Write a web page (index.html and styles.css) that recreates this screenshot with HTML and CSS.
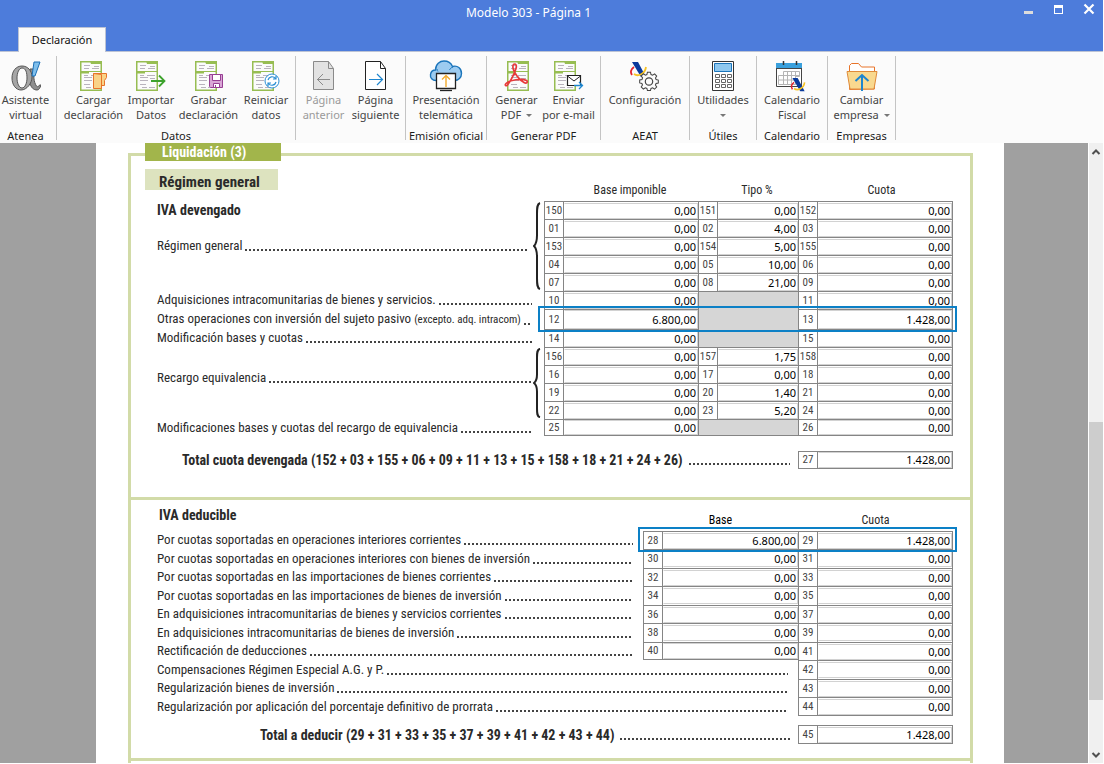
FILE: index.html
```html
<!DOCTYPE html>
<html lang="es">
<head>
<meta charset="utf-8">
<title>Modelo 303 - Página 1</title>
<link rel="stylesheet" href="styles.css">
</head>
<body>
<svg class="defs" aria-hidden="true">
  <symbol id="sheet" viewBox="0 0 30 32">
    <rect x=".75" y="1.75" width="20.5" height="28.5" fill="#fbfbfb" stroke="#97bd52" stroke-width="1.5"/>
    <path d="M10 1h12v3H11zM1 11h20v1H9v1.500H1z" fill="#97bd52"/>
    <path d="M4 5.500h6M14 6.500h5M4 8.500h5M12 8.500h7M4 15.500h4M11 15.500h8M4 17.500h8M14 18.500h5M4 20.500h8M4 24.500h6M6 27.500h5M13 27.500h6" stroke="#b9b3bd" fill="none"/>
  </symbol>
  <symbol id="aeat" viewBox="0 0 18 16">
    <path d="M2 0h6l8 15h-5z" fill="#0a3a9c"/>
    <path d="M4 5C1 7 0 10 2 13" fill="none" stroke="#e2222b" stroke-width="1.800"/>
    <path d="M4 12c4 3 11 0 12-7" fill="none" stroke="#f7c325" stroke-width="1.800"/>
  </symbol>
  <symbol id="brace" viewBox="0 0 8 90" preserveAspectRatio="none">
    <path d="M7 1C4 2 4 6 4 12V34C4 40 3 43 1 45C3 47 4 50 4 56V78C4 84 4 88 7 89" fill="none" stroke="#222" stroke-width="2" vector-effect="non-scaling-stroke"/>
  </symbol>
</svg>

<header class="titlebar">
  <h1 class="title">Modelo 303 - Página 1</h1>
  <div class="controls">
    <button aria-label="Minimizar"><svg width="12" height="12" viewBox="0 0 12 12"><path d="M1 8h9v3H1z" fill="#dcdcdc"/></svg></button>
    <button aria-label="Maximizar"><svg width="12" height="12" viewBox="0 0 12 12"><path d="M1 2h9v9H1zM2 5v5h7V5z" fill="#fff" fill-rule="evenodd"/></svg></button>
    <button aria-label="Cerrar"><svg width="12" height="12" viewBox="0 0 12 12"><path d="M1.500 1.500l9 9M10.500 1.500l-9 9" stroke="#fff" stroke-width="2.200"/></svg></button>
  </div>
</header>
<nav class="tabs"><button class="tab">Declaración</button></nav>

<div class="ribbon">
  <section class="group g-atenea">
    <div class="tools">
      <button class="tool">
        <svg width="30" height="30" viewBox="0 0 30 30"><path d="M23 8h-4c-1 5-1 9 0 14 1 5 4 7 7 7 2 0 3-2 4-5h-1.500c-1 2-2 2.500-3 1-3-4-3-11-2.500-17z" fill="#8e8e8e" stroke="#555"/><path d="M11 5C5 5 1 10 1 17s4 12 9 12c6 0 11-7 11-13S17 5 11 5zm0 2c4 0 5 5 5 10s-2 10-5 10-5-5-5-10 2-10 5-10z" fill="#a6a6a6" stroke="#555"/><path d="M23 1h6l-5 14h-3z" fill="#7fbfec" stroke="#1c6fb5"/></svg>
        <span>Asistente<br>virtual</span></button>
    </div>
    <h2>Atenea</h2>
  </section>
  <section class="group g-datos">
    <div class="tools">
      <button class="tool w-wide">
        <svg width="28" height="32" viewBox="0 0 28 32"><use href="#sheet" width="30" height="32"/><path d="M13.500 13.500h13v4l-2 3v5h-3v3h-8z" fill="#f9d388" stroke="#e8742a"/><path d="M13.500 13.500l8 1v14" fill="none" stroke="#e8742a"/></svg>
        <span>Cargar<br>declaración</span></button>
      <button class="tool w-mid">
        <svg width="30" height="32" viewBox="0 0 30 32"><use href="#sheet" width="30" height="32"/><path d="M15 21h13M23 15.500l5.500 5.500-5.500 5.500" fill="none" stroke="#3da32d" stroke-width="1.800"/></svg>
        <span>Importar<br>Datos</span></button>
      <button class="tool w-wide">
        <svg width="28" height="32" viewBox="0 0 28 32"><use href="#sheet" width="30" height="32"/><path d="M14.500 14.500h13v13h-12l-1-1z" fill="#d9a6d6" stroke="#973f93"/><path d="M17.500 14.500h8v6h-8zM18.500 23.500h6v4h-6z" fill="#fff" stroke="#973f93"/><path d="M20 25h1v2h-1z" fill="#973f93"/></svg>
        <span>Grabar<br>declaración</span></button>
      <button class="tool w-mid">
        <svg width="28" height="32" viewBox="0 0 28 32"><use href="#sheet" width="30" height="32"/><circle cx="20" cy="21" r="7" fill="#fff" stroke="#2b8fd4"/><path d="M16 20a4.200 4.200 0 0 1 7.500-1.500M24 22a4.200 4.200 0 0 1-7.500 1.500M24 16v3h-3M16 26v-3h3" fill="none" stroke="#2b8fd4" stroke-width="1.200"/></svg>
        <span>Reiniciar<br>datos</span></button>
    </div>
    <h2>Datos</h2>
  </section>
  <section class="group g-pages">
    <div class="tools">
      <button class="tool w-mid" disabled>
        <svg width="24" height="32" viewBox="0 0 24 32"><path d="M1.500 1.500h15l5 7v21h-20z" fill="#e2e2e2" stroke="#8a8a8a"/><path d="M16.500 1.500v7h5M18 19.500H5M11 14l-5.500 5.500L11 25" fill="none" stroke="#8a8a8a"/></svg>
        <span>Página<br>anterior</span></button>
      <button class="tool w-next">
        <svg width="24" height="32" viewBox="0 0 24 32"><path d="M1.500 1.500h15l5 7v21h-20z" fill="#fff" stroke="#222"/><path d="M16.500 1.500v7h5" fill="none" stroke="#222"/><path d="M5 19.500h13M13 14l5.500 5.500L13 25" fill="none" stroke="#1e86cf" stroke-width="1.200"/></svg>
        <span>Página<br>siguiente</span></button>
    </div>
  </section>
  <section class="group g-emision">
    <div class="tools">
      <button class="tool">
        <svg width="34" height="32" viewBox="0 0 34 32"><path d="M8 20.500C3 21 1 17.500 1.500 14.500 2 11.500 4 10 6.500 10 6.500 4 11 1 15 1c4 0 7 2 8.500 5.500 5-1.500 9 2 9 7 0 4-3 7-7 7z" fill="#9ccbf0" stroke="#1b75bb" stroke-width="1.400"/><path d="M8 9c0 1 .5 2 1 2.500M24 7c-2 .5-3 2-3.500 3" fill="none" stroke="#1b75bb"/><path d="M7.500 13.500h19v15h-19z" fill="#fff" stroke="#222" stroke-width="1.300"/><path d="M11 30.500h12" stroke="#222" stroke-width="1.300"/><path d="M17 27V16M13 19.500l4-4 4 4" fill="none" stroke="#f2ab2e" stroke-width="1.400"/></svg>
        <span>Presentación<br>telemática</span></button>
    </div>
    <h2>Emisión oficial</h2>
  </section>
  <section class="group g-pdf">
    <div class="tools">
      <button class="tool w-mid">
        <svg width="26" height="32" viewBox="0 0 26 32"><use href="#sheet" x="3" width="30" height="32"/><path d="M9.500 4.500c2-1.500 3.500.5 2.500 4C10.500 14 6 22 3.500 25c-1.500 1.800-3 0-1.500-1.500C5.500 20 18 18 22.500 20.500c2 1.500 0 3.500-2.500 2C15 20 9.500 12 9 8c-.2-1.500-.2-2.800.5-3.500z" fill="none" stroke="#e83a3a" stroke-width="1.700"/></svg>
        <span>Generar<br>PDF <i class="caret"></i></span></button>
      <button class="tool w-next">
        <svg width="30" height="32" viewBox="0 0 30 32"><use href="#sheet" width="30" height="32"/><path d="M13.500 15.500h13v10h-13z" fill="#fff" stroke="#222" stroke-width="1.200"/><path d="M13.500 16l6.500 5 6.500-5" fill="none" stroke="#222"/><path d="M20 25.500h8M25 22l3.500 3.500L25 29" fill="none" stroke="#1e86cf" stroke-width="1.300"/></svg>
        <span>Enviar<br>por e-mail</span></button>
    </div>
    <h2>Generar PDF</h2>
  </section>
  <section class="group g-aeat">
    <div class="tools">
      <button class="tool">
        <svg width="30" height="32" viewBox="0 0 30 32"><use href="#aeat" x="0" y="2" width="18" height="16"/><g fill="#fbfbfb" stroke="#444" stroke-width="1.200"><path d="M17.200 12.500h3.600l.6 2.700 1.900.8 2.400-1.500 2.400 2.500-1.400 2.300.7 1.800 2.600.6v3.500l-2.600.6-.8 1.800 1.500 2.300-2.500 2.400-2.200-1.500-2 .8-.6 2.300h-3.600l-.6-2.300-1.800-.8-2.400 1.500-2.500-2.500 1.500-2.300-.7-1.800-2.600-.6v-3.500l2.700-.6.700-1.800-1.600-2.300 2.500-2.400 2.400 1.400 1.800-.7z" transform="translate(2.800 1.600) scale(.85)"/><circle cx="19" cy="21.500" r="3.700"/></g></svg>
        <span>Configuración</span></button>
    </div>
    <h2>AEAT</h2>
  </section>
  <section class="group g-utiles">
    <div class="tools">
      <button class="tool">
        <svg width="24" height="32" viewBox="0 0 24 32"><path d="M1.500 1.500h21v29h-21z" fill="#fff" stroke="#333"/><path d="M3.500 3.500h17v8h-17z" fill="#8fc8ef" stroke="#1b75bb"/><path d="M4.500 14.500h4v3h-4zm6 0h4v3h-4zm6 0h4v3h-4zM4.500 19.500h4v3h-4zm6 0h4v3h-4zm6 0h4v3h-4zM4.500 24.500h4v3h-4zm6 0h4v3h-4zm6 0h4v3h-4z" fill="#fff" stroke="#666"/></svg>
        <span>Utilidades<br><i class="caret alone"></i></span></button>
    </div>
    <h2>Útiles</h2>
  </section>
  <section class="group g-cal">
    <div class="tools">
      <button class="tool">
        <svg width="34" height="32" viewBox="0 0 34 32"><path d="M1.500 3.500h25v23h-25z" fill="#fff" stroke="#444"/><path d="M1 3h26v6H1z" fill="#3aa0dc"/><path d="M1 8.500h26" stroke="#444"/><path d="M8.500 1v4M21.500 1v4" stroke="#333" stroke-width="1.500"/><path d="M8.500 11.500h16v5h-4v8h-17v-9h5zM8.500 15.500h16M3.500 20h20M8.500 15v9.500M12.500 11.500v13M16.500 11.500v13M20.500 11.500v13" fill="none" stroke="#b5b5b5"/><use href="#aeat" x="15" y="18" width="17" height="14"/></svg>
        <span>Calendario<br>Fiscal</span></button>
    </div>
    <h2>Calendario</h2>
  </section>
  <section class="group g-emp">
    <div class="tools">
      <button class="tool">
        <svg width="32" height="32" viewBox="0 0 32 32"><path d="M3.500 29.500V5.500l2-2h7l3 3.500h13v22z" fill="#fff" stroke="#e8742a"/><path d="M1 11.500h30l-3 17.500H4z" fill="#f9d98f" stroke="#e08b3a"/><path d="M16 31V15M9.500 21l6.500-6 6.500 6" fill="none" stroke="#1e86cf" stroke-width="2"/></svg>
        <span>Cambiar<br>empresa <i class="caret"></i></span></button>
    </div>
    <h2>Empresas</h2>
  </section>
</div>

<div class="workspace">
<main class="sheet">
<form class="frame">
<section class="part part-a">
<h2 class="badge">Liquidación (3)</h2>
<table class="grid grid-a">
<colgroup><col><col class="c-brace"><col class="c-code"><col class="c-base"><col class="c-code"><col class="c-tipo"><col class="c-code"><col class="c-val"></colgroup>
<thead><tr><th colspan="2" class="th-tag"><span class="tag">Régimen general</span></th><th colspan="2" class="th-base">Base imponible</th><th colspan="2" class="th-base">Tipo %</th><th colspan="2" class="th-cuota">Cuota</th></tr></thead>
<tbody>
<tr><td class="lbl"><strong>IVA devengado</strong></td><td rowspan="5" class="brace"><svg width="8" height="88"><use href="#brace" width="8" height="88"/></svg></td><td class="code"><label for="c150">150</label></td><td class="val"><input id="c150" value="0,00"></td><td class="code"><label for="c151">151</label></td><td class="val"><input id="c151" value="0,00"></td><td class="code"><label for="c152">152</label></td><td class="val"><input id="c152" value="0,00"></td></tr>
<tr><td class="lbl up-lg" rowspan="4"><div class="lead">Régimen general</div></td><td class="code"><label for="c01">01</label></td><td class="val"><input id="c01" value="0,00"></td><td class="code"><label for="c02">02</label></td><td class="val"><input id="c02" value="4,00"></td><td class="code"><label for="c03">03</label></td><td class="val"><input id="c03" value="0,00"></td></tr>
<tr><td class="code"><label for="c153">153</label></td><td class="val"><input id="c153" value="0,00"></td><td class="code"><label for="c154">154</label></td><td class="val"><input id="c154" value="5,00"></td><td class="code"><label for="c155">155</label></td><td class="val"><input id="c155" value="0,00"></td></tr>
<tr><td class="code"><label for="c04">04</label></td><td class="val"><input id="c04" value="0,00"></td><td class="code"><label for="c05">05</label></td><td class="val"><input id="c05" value="10,00"></td><td class="code"><label for="c06">06</label></td><td class="val"><input id="c06" value="0,00"></td></tr>
<tr><td class="code"><label for="c07">07</label></td><td class="val"><input id="c07" value="0,00"></td><td class="code"><label for="c08">08</label></td><td class="val"><input id="c08" value="21,00"></td><td class="code"><label for="c09">09</label></td><td class="val"><input id="c09" value="0,00"></td></tr>
<tr><td class="lbl" colspan="2"><div class="lead">Adquisiciones intracomunitarias de bienes y servicios.</div></td><td class="code"><label for="c10">10</label></td><td class="val"><input id="c10" value="0,00"></td><td class="void" colspan="2" rowspan="3"></td><td class="code"><label for="c11">11</label></td><td class="val"><input id="c11" value="0,00"></td></tr>
<tr class="marked"><td class="lbl" colspan="2"><div class="lead"><span>Otras operaciones con inversión del sujeto pasivo <small>(excepto. adq. intracom)</small></span></div></td><td class="code"><label for="c12">12</label></td><td class="val"><input id="c12" value="6.800,00"></td><td class="code"><label for="c13">13</label></td><td class="val end"><input id="c13" value="1.428,00"></td></tr>
<tr><td class="lbl" colspan="2"><div class="lead">Modificación bases y cuotas</div></td><td class="code"><label for="c14">14</label></td><td class="val"><input id="c14" value="0,00"></td><td class="code"><label for="c15">15</label></td><td class="val"><input id="c15" value="0,00"></td></tr>
<tr><td class="lbl up-sm" rowspan="4"><div class="lead">Recargo equivalencia</div></td><td rowspan="4" class="brace"><svg width="8" height="70"><use href="#brace" width="8" height="70"/></svg></td><td class="code"><label for="c156">156</label></td><td class="val"><input id="c156" value="0,00"></td><td class="code"><label for="c157">157</label></td><td class="val"><input id="c157" value="1,75"></td><td class="code"><label for="c158">158</label></td><td class="val"><input id="c158" value="0,00"></td></tr>
<tr><td class="code"><label for="c16">16</label></td><td class="val"><input id="c16" value="0,00"></td><td class="code"><label for="c17">17</label></td><td class="val"><input id="c17" value="0,00"></td><td class="code"><label for="c18">18</label></td><td class="val"><input id="c18" value="0,00"></td></tr>
<tr><td class="code"><label for="c19">19</label></td><td class="val"><input id="c19" value="0,00"></td><td class="code"><label for="c20">20</label></td><td class="val"><input id="c20" value="1,40"></td><td class="code"><label for="c21">21</label></td><td class="val"><input id="c21" value="0,00"></td></tr>
<tr><td class="code"><label for="c22">22</label></td><td class="val"><input id="c22" value="0,00"></td><td class="code"><label for="c23">23</label></td><td class="val"><input id="c23" value="5,20"></td><td class="code"><label for="c24">24</label></td><td class="val"><input id="c24" value="0,00"></td></tr>
<tr class="last"><td class="lbl" colspan="2"><div class="lead">Modificaciones bases y cuotas del recargo de equivalencia</div></td><td class="code"><label for="c25">25</label></td><td class="val"><input id="c25" value="0,00"></td><td class="void" colspan="2"></td><td class="code"><label for="c26">26</label></td><td class="val"><input id="c26" value="0,00"></td></tr>
</tbody>
<tfoot>
<tr class="gap"><td colspan="8"></td></tr>
<tr class="last"><td class="lbl total total-a" colspan="6"><div class="lead">Total cuota devengada (152 + 03 + 155 + 06 + 09 + 11 + 13 + 15 + 158 + 18 + 21 + 24 + 26)</div></td><td class="code"><label for="c27">27</label></td><td class="val"><input id="c27" value="1.428,00"></td></tr>
</tfoot>
</table>
</section>

<section class="part part-b">
<table class="grid grid-b">
<colgroup><col><col class="c-code"><col class="c-val"><col class="c-code"><col class="c-val"></colgroup>
<thead><tr><th class="th-sub">IVA deducible</th><th colspan="2" class="dark">Base</th><th colspan="2">Cuota</th></tr></thead>
<tbody>
<tr class="marked"><td class="lbl"><div class="lead">Por cuotas soportadas en operaciones interiores corrientes</div></td><td class="code"><label for="c28">28</label></td><td class="val"><input id="c28" value="6.800,00"></td><td class="code"><label for="c29">29</label></td><td class="val end"><input id="c29" value="1.428,00"></td></tr>
<tr><td class="lbl"><div class="lead">Por cuotas soportadas en operaciones interiores con bienes de inversión</div></td><td class="code"><label for="c30">30</label></td><td class="val"><input id="c30" value="0,00"></td><td class="code"><label for="c31">31</label></td><td class="val"><input id="c31" value="0,00"></td></tr>
<tr><td class="lbl"><div class="lead">Por cuotas soportadas en las importaciones de bienes corrientes</div></td><td class="code"><label for="c32">32</label></td><td class="val"><input id="c32" value="0,00"></td><td class="code"><label for="c33">33</label></td><td class="val"><input id="c33" value="0,00"></td></tr>
<tr><td class="lbl"><div class="lead">Por cuotas soportadas en las importaciones de bienes de inversión</div></td><td class="code"><label for="c34">34</label></td><td class="val"><input id="c34" value="0,00"></td><td class="code"><label for="c35">35</label></td><td class="val"><input id="c35" value="0,00"></td></tr>
<tr><td class="lbl"><div class="lead">En adquisiciones intracomunitarias de bienes y servicios corrientes</div></td><td class="code"><label for="c36">36</label></td><td class="val"><input id="c36" value="0,00"></td><td class="code"><label for="c37">37</label></td><td class="val"><input id="c37" value="0,00"></td></tr>
<tr><td class="lbl"><div class="lead">En adquisiciones intracomunitarias de bienes de inversión</div></td><td class="code"><label for="c38">38</label></td><td class="val"><input id="c38" value="0,00"></td><td class="code"><label for="c39">39</label></td><td class="val"><input id="c39" value="0,00"></td></tr>
<tr class="close"><td class="lbl"><div class="lead">Rectificación de deducciones</div></td><td class="code"><label for="c40">40</label></td><td class="val"><input id="c40" value="0,00"></td><td class="code"><label for="c41">41</label></td><td class="val"><input id="c41" value="0,00"></td></tr>
<tr><td class="lbl" colspan="3"><div class="lead">Compensaciones Régimen Especial A.G. y P.</div></td><td class="code"><label for="c42">42</label></td><td class="val"><input id="c42" value="0,00"></td></tr>
<tr><td class="lbl" colspan="3"><div class="lead">Regularización bienes de inversión</div></td><td class="code"><label for="c43">43</label></td><td class="val"><input id="c43" value="0,00"></td></tr>
<tr class="last"><td class="lbl" colspan="3"><div class="lead">Regularización por aplicación del porcentaje definitivo de prorrata</div></td><td class="code"><label for="c44">44</label></td><td class="val"><input id="c44" value="0,00"></td></tr>
</tbody>
<tfoot>
<tr class="gap"><td colspan="5"></td></tr>
<tr class="last"><td class="lbl total total-b" colspan="3"><div class="lead">Total a deducir (29 + 31 + 33 + 35 + 37 + 39 + 41 + 42 + 43 + 44)</div></td><td class="code"><label for="c45">45</label></td><td class="val"><input id="c45" value="1.428,00"></td></tr>
</tfoot>
</table>
</section>
</form>
</main>
<div class="scrollbar">
  <button aria-label="Subir"><svg width="10" height="8" viewBox="0 0 10 8"><path d="M1.500 6L5 2.500 8.500 6" fill="none" stroke="#505050" stroke-width="2"/></svg></button>
  <div class="track"><div class="thumb"></div></div>
  <button aria-label="Bajar"><svg width="10" height="8" viewBox="0 0 10 8"><path d="M1.500 2L5 5.500 8.500 2" fill="none" stroke="#505050" stroke-width="2"/></svg></button>
</div>
</div>
</body>
</html>
```
FILE: styles.css
```css
*, *::after { box-sizing: border-box; }

body {
  margin: 0;
  padding: 0 1px 1px 0;
  height: 100vh;
  display: flex;
  flex-direction: column;
  overflow: hidden;
  background: #fff;
  font: 11px/15px "Noto Sans", "Open Sans", sans-serif;
}

button {
  border: 0;
  padding: 0;
  background: none;
  font: inherit;
  color: inherit;
}

h1, h2 { margin: 0; font: inherit; }
svg { display: block; }
.defs { position: absolute; width: 0; height: 0; }

/* window chrome */
.titlebar {
  display: flex;
  height: 27px;
  background: #4d7cdb;
  color: #fff;
}
.title {
  flex: 1;
  padding: 5px 0 0 44px;
  text-align: center;
  font-size: 12px;
}
.controls { display: flex; }
.controls button {
  width: 30px;
  padding: 3px 0 0 10px;
  display: flex;
}
.tabs {
  display: flex;
  height: 25px;
  padding-left: 18px;
  background: #4d7cdb;
  border-bottom: 1px solid #bcc3d4;
}
.tab {
  height: 25px;
  width: 88px;
  padding-bottom: 1px;
  background: #fbfbfb;
  border: 1px solid #bcc3d4;
  border-bottom: 0;
  color: #111;
}

/* ribbon */
.ribbon {
  display: flex;
  flex: none;
  height: 91px;
  padding: 4px 0 3px;
  background: #fbfbfb;
}
.group {
  display: flex;
  flex-direction: column;
  justify-content: space-between;
  border-right: 1px solid #c4c4c4;
}
.group h2 {
  height: 12px;
  line-height: 15px;
  text-align: center;
  color: #1c1c1c;
  white-space: nowrap;
}
.tools { display: flex; justify-content: center; gap: 6px; }
.tool {
  display: flex;
  flex-direction: column;
  align-items: center;
  color: #444;
  white-space: nowrap;
}
.tool svg { height: 32px; margin-top: 4px; }
.tool:disabled { color: #9a9a9a; }
.w-wide { width: 59px; }
.w-mid { width: 44px; }
.w-next { width: 48px; }
.g-atenea { width: 57px; padding-right: 5px; }
.g-datos { width: 239px; }
.g-pages { width: 110px; }
.g-emision { width: 81px; }
.g-pdf { width: 114px; }
.g-aeat { width: 89px; }
.g-utiles { width: 67px; }
.g-cal { width: 71px; }
.g-emp { width: 68px; }
.caret {
  display: inline-block;
  margin-left: 2px;
  border: 3px solid transparent;
  border-top-color: #777;
  border-bottom: 0;
  vertical-align: 2px;
}
.alone { margin-left: 0; }

/* document area */
.workspace {
  display: flex;
  flex: 1;
  min-height: 0;
  background: #a0a0a0;
}
.sheet {
  flex: 1;
  min-width: 0;
  margin: 0 84px 0 96px;
  padding: 10px 31px 0 32px;
  background: #fff;
  overflow: hidden;
  font-family: "Roboto Condensed", "Liberation Sans Narrow", Roboto, sans-serif;
  color: #2a2a2a;
}
.frame {
  height: 100%;
  min-height: 615px;
  border: solid #d2dba8;
  border-width: 3px 3px 0;
}
.part {
  position: relative;
  border-bottom: 3px solid #d2dba8;
}
.part-a { padding: 13px 17px 28px 14px; }
.part-b { padding: 0 17px 14px 14px; }
.badge {
  position: absolute;
  top: -13px;
  left: 14px;
  width: 136px;
  height: 18px;
  padding-left: 17px;
  background: #a2b54b;
  color: #fff;
  font-size: 14px;
  line-height: 18px;
  font-weight: bold;
}

.grid {
  width: 100%;
  table-layout: fixed;
  border-collapse: separate;
  border-spacing: 0;
}
.c-brace { width: 12px; }
.c-code { width: 19px; }
.c-base { width: 135px; }
.c-val { width: 136px; }
.c-tipo { width: 81px; }
.grid th, .grid td { padding: 0; }
.grid th {
  height: 32px;
  font-weight: normal;
  font-size: 12px;
  line-height: 16px;
  vertical-align: bottom;
  padding-bottom: 3px;
}
.grid-b th { height: 31px; }
.grid .th-tag { vertical-align: top; text-align: left; padding: 0; }
.grid .th-base { padding-left: 18px; }
.grid .th-cuota { padding-left: 12px; }
.grid .dark { color: #000; }
.tag {
  display: block;
  width: 133px;
  height: 21px;
  padding: 3px 0 0 14px;
  background: #dde3bf;
  font-size: 15px;
  line-height: 20px;
  font-weight: bold;
}
.grid .th-sub {
  padding: 0 0 8px 14px;
  text-align: left;
  font-size: 14px;
  font-weight: bold;
}

.grid tbody tr, .grid tfoot tr { height: 18px; }
.grid-a .marked { height: 20px; }
.grid-a tbody .last { height: 17px; }
.grid-b tbody tr:nth-child(even) { height: 19px; }
.grid-b tfoot .last { height: 19px; }
.grid-a .gap { height: 15px; }
.grid-b .gap { height: 9px; }

.grid .lbl {
  padding: 0 12px 0 12px;
  font-size: 13px;
  line-height: 16px;
  white-space: nowrap;
}
.lbl strong { display: block; font-size: 14px; }
.grid-b .lbl { padding-right: 10px; }
.grid .up-lg { padding: 0 4px 18px 12px; }
.grid .up-sm { padding: 0 1px 10px 12px; }
.grid .total { font-weight: bold; font-size: 14px; padding-right: 8px; }
.grid .total-a { padding-left: 37px; }
.grid .total-b { padding-left: 115px; }
.lead { display: flex; align-items: flex-end; gap: 3px; }
.total .lead { gap: 6px; }
.lead::after {
  content: "";
  flex: 1;
  height: 2px;
  margin-bottom: 3px;
  background: repeating-linear-gradient(90deg, #444 0 2px, transparent 2px 4px);
}
.lead small { font-size: 11px; }

.brace { vertical-align: middle; }
.brace svg { margin-left: 1px; }

.code, .val, .void {
  border-top: 1px solid #858585;
  border-left: 1px solid #858585;
}
.val:last-child { border-right: 1px solid #858585; }
.last .code, .last .val, .last .void { border-bottom: 1px solid #858585; }
.close .code:nth-child(2), .close .val:nth-child(3) { border-bottom: 1px solid #858585; }
.code {
  font-size: 11px;
  line-height: 14px;
  text-align: center;
  color: #444;
}
.code label { display: block; }
.void { background: #d6d6d6; }
.val { position: relative; }
.val input {
  display: block;
  width: 100%;
  height: 16px;
  margin: 0;
  padding: 0 1px 1px 4px;
  border: 1px solid #d2d2d2;
  border-left-color: #fff;
  background: #fff;
  color: #000;
  font: 11px/13px "Noto Sans", "Open Sans", sans-serif;
  text-align: right;
  outline: 0;
}
.grid-a tbody .last input { height: 15px; }
.grid-a .marked input { height: 19px; }

/* rows called out with a blue outline */
.end::after {
  content: "";
  position: absolute;
  z-index: 1;
  top: -4px;
  right: -5px;
  bottom: -3px;
  width: 419px;
  border: 2px solid #0c80c6;
  pointer-events: none;
}
.grid-b .end::after { top: -5px; width: 319px; }

.scrollbar {
  display: flex;
  flex-direction: column;
  width: 14px;
  margin-left: 1px;
  background: #f0f0f0;
  box-shadow: -1px 0 #fff;
}
.scrollbar button {
  display: grid;
  place-items: center;
  height: 17px;
}
.track { flex: 1; padding-top: 262px; }
.thumb { height: 278px; background: #cdcdcd; }
```
